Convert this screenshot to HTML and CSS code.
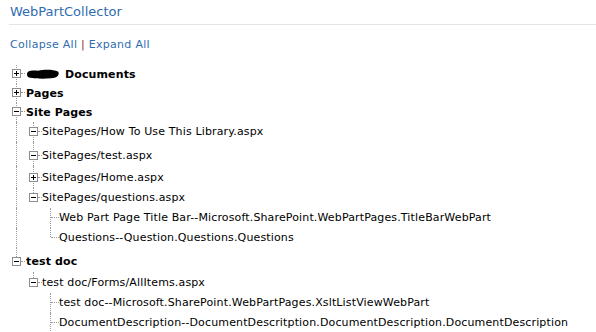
FILE: index.html
```html
<!DOCTYPE html>
<html>
<head>
<meta charset="utf-8">
<link rel="stylesheet" href="styles.css">
</head>
<body>
<h2 class="title">WebPartCollector</h2>
<div class="actions"><a class="lnk">Collapse All</a> <span class="sep">|</span> <a class="lnk">Expand All</a></div>
<div class="tree">
  <div class="row h19">
    <span class="cell ln box"><svg class="btn" width="9" height="9" viewBox="0 0 9 9"><rect x="0.5" y="0.5" width="8" height="8" fill="#fff" stroke="#8e8e8e"/><path d="M2 4.5h5M4.5 2v5" stroke="#000"/></svg></span>
    <span class="label bold"><svg class="blot" width="34" height="10" viewBox="0 0 34 10"><path d="M1 5C1 1.5 6 1 12 1.8C18 0.5 27 0.4 32 2.5C34 5 32 9 25 9.3C17 10 9 9.6 4 8.8C1.5 8.3 1 6.8 1 5Z" fill="#000"/></svg>Documents</span>
  </div>
  <div class="row h19">
    <span class="cell ln box"><svg class="btn" width="9" height="9" viewBox="0 0 9 9"><rect x="0.5" y="0.5" width="8" height="8" fill="#fff" stroke="#8e8e8e"/><path d="M2 4.5h5M4.5 2v5" stroke="#000"/></svg></span>
    <span class="label bold">Pages</span>
  </div>
  <div class="row h19">
    <span class="cell ln box"><svg class="btn" width="9" height="9" viewBox="0 0 9 9"><rect x="0.5" y="0.5" width="8" height="8" fill="#fff" stroke="#8e8e8e"/><path d="M2 4.5h5" stroke="#000"/></svg></span>
    <span class="label bold">Site Pages</span>
  </div>
  <div class="row">
    <span class="cell ln"></span>
    <span class="cell ln box"><svg class="btn" width="9" height="9" viewBox="0 0 9 9"><rect x="0.5" y="0.5" width="8" height="8" fill="#fff" stroke="#8e8e8e"/><path d="M2 4.5h5" stroke="#000"/></svg></span>
    <span class="label">SitePages/How To Use This Library.aspx</span>
  </div>
  <div class="row p4">
    <span class="cell ln"></span>
    <span class="cell ln box"><svg class="btn" width="9" height="9" viewBox="0 0 9 9"><rect x="0.5" y="0.5" width="8" height="8" fill="#fff" stroke="#8e8e8e"/><path d="M2 4.5h5" stroke="#000"/></svg></span>
    <span class="label">SitePages/test.aspx</span>
  </div>
  <div class="row p2">
    <span class="cell ln"></span>
    <span class="cell ln box"><svg class="btn" width="9" height="9" viewBox="0 0 9 9"><rect x="0.5" y="0.5" width="8" height="8" fill="#fff" stroke="#8e8e8e"/><path d="M2 4.5h5M4.5 2v5" stroke="#000"/></svg></span>
    <span class="label">SitePages/Home.aspx</span>
  </div>
  <div class="row">
    <span class="cell ln"></span>
    <span class="cell ln end box"><svg class="btn" width="9" height="9" viewBox="0 0 9 9"><rect x="0.5" y="0.5" width="8" height="8" fill="#fff" stroke="#8e8e8e"/><path d="M2 4.5h5" stroke="#000"/></svg></span>
    <span class="label">SitePages/questions.aspx</span>
  </div>
  <div class="row">
    <span class="cell ln"></span>
    <span class="cell"></span>
    <span class="cell ln hz"></span>
    <span class="label">Web Part Page Title Bar--Microsoft.SharePoint.WebPartPages.TitleBarWebPart</span>
  </div>
  <div class="row">
    <span class="cell ln"></span>
    <span class="cell"></span>
    <span class="cell ln end hz"></span>
    <span class="label">Questions--Question.Questions.Questions</span>
  </div>
  <div class="row p3">
    <span class="cell ln end box"><svg class="btn" width="9" height="9" viewBox="0 0 9 9"><rect x="0.5" y="0.5" width="8" height="8" fill="#fff" stroke="#8e8e8e"/><path d="M2 4.5h5" stroke="#000"/></svg></span>
    <span class="label bold">test doc</span>
  </div>
  <div class="row p1">
    <span class="cell"></span>
    <span class="cell ln end box"><svg class="btn" width="9" height="9" viewBox="0 0 9 9"><rect x="0.5" y="0.5" width="8" height="8" fill="#fff" stroke="#8e8e8e"/><path d="M2 4.5h5" stroke="#000"/></svg></span>
    <span class="label">test doc/Forms/AllItems.aspx</span>
  </div>
  <div class="row">
    <span class="cell"></span>
    <span class="cell"></span>
    <span class="cell ln hz"></span>
    <span class="label">test doc--Microsoft.SharePoint.WebPartPages.XsltListViewWebPart</span>
  </div>
  <div class="row">
    <span class="cell"></span>
    <span class="cell"></span>
    <span class="cell ln hz"></span>
    <span class="label">DocumentDescription--DocumentDescritption.DocumentDescription.DocumentDescription</span>
  </div>
</div>
</body>
</html>
```
FILE: styles.css
```css
html, body {
  margin: 0;
  padding: 0;
  background: #fff;
}
body {
  font-family: "DejaVu Sans", Verdana, sans-serif;
  color: #000;
  overflow: hidden;
}
.title {
  margin: 0 0 0 9px;
  padding: 4px 0 5px 1px;
  font-size: 13px;
  line-height: 15px;
  font-weight: normal;
  color: #2f6db0;
  border-bottom: 1px solid #e4e4e4;
}
.actions {
  margin: 13px 0 0 10px;
  font-size: 11px;
  line-height: 13px;
  letter-spacing: 0.28px;
  color: #2f6db0;
}
.lnk {
  color: #2f6db0;
  text-decoration: none;
}
.sep {
  color: #8b2c2c;
}
.tree {
  margin-top: 14px;
  padding-left: 8px;
  font-size: 11px;
  letter-spacing: 0.14px;
}
.row {
  --h: 20px;
  --pad: 0px;
  --mid: 9px;
  display: flex;
  height: calc(var(--h) + var(--pad));
}
.row.h19 { --h: 19px; --mid: 8px; }
.row.p1 { --pad: 1px; }
.row.p2 { --pad: 2px; }
.row.p3 { --pad: 4px; }
.row.p4 { --pad: 4px; }
.cell {
  position: relative;
  width: 17px;
  flex: none;
}
.cell.ln::before {
  content: "";
  position: absolute;
  left: 8px;
  top: 0;
  bottom: 0;
  border-left: 1px dotted #9a9a9a;
}
.cell.ln.end::before {
  bottom: auto;
  height: calc(var(--pad) + var(--mid));
}
.cell.hz::after {
  content: "";
  position: absolute;
  left: 9px;
  right: 0;
  top: calc(var(--pad) + var(--mid));
  border-top: 1px dotted #9a9a9a;
}
.cell.box::after {
  content: "";
  position: absolute;
  left: 13px;
  right: 0;
  top: calc(var(--pad) + var(--mid));
  border-top: 1px dotted #9a9a9a;
}
.btn {
  position: absolute;
  left: 4px;
  top: calc(var(--pad) + var(--mid) - 4px);
  display: block;
}
.label {
  padding-top: var(--pad);
  line-height: var(--h);
  white-space: nowrap;
}
.bold {
  font-weight: bold;
  padding-left: 1px;
  letter-spacing: 0.12px;
}
.blot {
  display: inline-block;
  vertical-align: -1px;
  margin-left: 0;
  margin-right: 5px;
}
```
